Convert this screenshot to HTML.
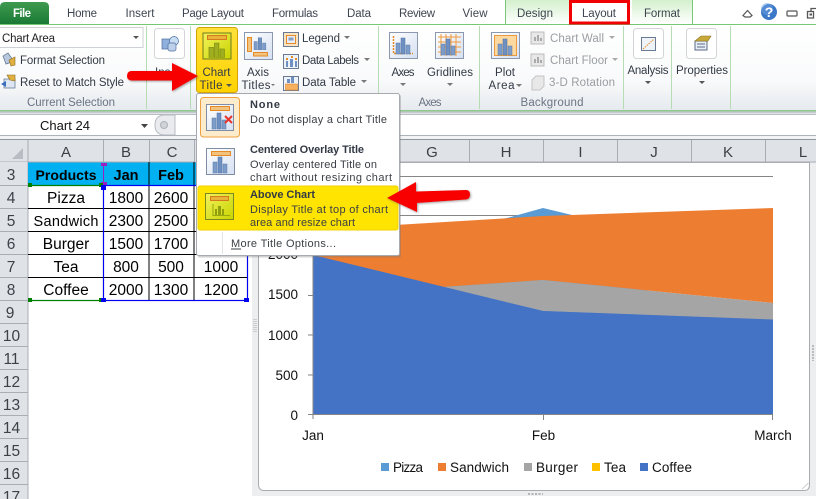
<!DOCTYPE html>
<html><head><meta charset="utf-8">
<style>
html,body{margin:0;padding:0;background:#fff;width:816px;height:499px;overflow:hidden}
svg{display:block}
text{font-family:"Liberation Sans",sans-serif;font-size:11.5px;fill:#3b3f45}
.tab{font-size:11.5px;fill:#3f4550;text-anchor:middle}
.rb{font-size:11.5px;fill:#333a45}
.dis{font-size:11.5px;fill:#9a9da2}
.grp{font-size:11.5px;fill:#6b7484;text-anchor:middle}
.c{text-anchor:middle}
.hd{font-size:15px;fill:#3c4148;text-anchor:middle}
.rh{font-size:15.5px;fill:#3c4148;text-anchor:middle}
.cell{font-size:15.5px;fill:#000;text-anchor:middle}
.b{font-weight:bold}
.ax{font-size:13.5px;fill:#111}
.m{font-size:11px;fill:#3b3f45}
.mb{font-size:11px;font-weight:bold;fill:#333a45}
</style></head><body>
<svg width="816" height="499" viewBox="0 0 816 499" xmlns="http://www.w3.org/2000/svg">
<defs>
<linearGradient id="rib" x1="0" y1="0" x2="0" y2="1"><stop offset="0" stop-color="#fff"/><stop offset=".65" stop-color="#f9fafb"/><stop offset="1" stop-color="#e6eaee"/></linearGradient>
<linearGradient id="file" x1="0" y1="0" x2="0" y2="1"><stop offset="0" stop-color="#3f9a4f"/><stop offset="1" stop-color="#1a7a35"/></linearGradient>
<linearGradient id="ctx" x1="0" y1="0" x2="0" y2="1"><stop offset="0" stop-color="#d3f0cd"/><stop offset="1" stop-color="#fff"/></linearGradient>
<linearGradient id="yb" x1="0" y1="0" x2="0" y2="1"><stop offset="0" stop-color="#ffe13a"/><stop offset="1" stop-color="#ffd200"/></linearGradient>
<linearGradient id="ic" x1="0" y1="0" x2="1" y2="1"><stop offset="0" stop-color="#fff"/><stop offset="1" stop-color="#d5e0f2"/></linearGradient>
<linearGradient id="ygi" x1="0" y1="0" x2="1" y2="1"><stop offset="0" stop-color="#f3f25a"/><stop offset="1" stop-color="#c8d400"/></linearGradient>
<filter id="sh" x="-20%" y="-30%" width="140%" height="160%"><feDropShadow dx="1" dy="1" stdDeviation="1" flood-color="#555" flood-opacity=".55"/></filter>
<g id="bars"><rect x="0" y="6" width="4" height="11" fill="#7d9cc9" stroke="#5a7aa8" stroke-width=".5"/><rect x="5" y="1" width="4" height="16" fill="#6f90c2" stroke="#4f6f9f" stroke-width=".5"/><rect x="10" y="8" width="4" height="9" fill="#7d9cc9" stroke="#5a7aa8" stroke-width=".5"/></g>
</defs>
<rect width="816" height="499" fill="#fff"/>

<!-- ribbon -->
<rect x="0" y="0" width="816" height="24" fill="#fff"/>
<rect x="0" y="25" width="816" height="85" fill="url(#rib)"/>
<rect x="505" y="0" width="64" height="24" fill="url(#ctx)"/>
<rect x="632" y="0" width="60" height="24" fill="url(#ctx)"/>
<rect x="569" y="2" width="61" height="22" fill="#fff"/>
<path d="M505.5 24V0M692.5 24V0" stroke="#7ac77c"/>
<path d="M0 24.5H816" stroke="#76c776" stroke-width="1"/>
<path d="M0 24V7Q0 2 5 2H44Q49 2 49 7V24Z" fill="url(#file)"/>
<text x="22" y="17" class="c b" style="fill:#fff;font-size:11.5px" textLength="18">File</text>
<text x="82" y="17" class="tab" textLength="30">Home</text>
<text x="140" y="17" class="tab" textLength="29">Insert</text>
<text x="213" y="17" class="tab" textLength="62">Page Layout</text>
<text x="295" y="17" class="tab" textLength="46">Formulas</text>
<text x="359" y="17" class="tab" textLength="24">Data</text>
<text x="417" y="17" class="tab" textLength="36">Review</text>
<text x="475" y="17" class="tab" textLength="25">View</text>
<text x="535" y="17" class="tab" textLength="36">Design</text>
<text x="599" y="17" class="tab" textLength="34">Layout</text>
<text x="662" y="17" class="tab" textLength="36">Format</text>
<rect x="570.5" y="1.5" width="58" height="21.5" fill="none" stroke="#f00000" stroke-width="3"/>

<!-- window controls -->
<path d="M743 15.5L747.5 10.5L752 15.5L750 17H745Z" fill="none" stroke="#555" stroke-width="1.2"/>
<circle cx="769" cy="12" r="8" fill="#3c78c8"/>
<circle cx="767" cy="9" r="6" fill="#6a9fe0" opacity=".5"/>
<text x="769" y="17" class="c b" style="fill:#fff;font-size:14px">?</text>
<rect x="787" y="11" width="10" height="5" rx="1" fill="none" stroke="#555" stroke-width="1.2"/>
<path d="M807.5 18V11.5H813.5V18ZM811 11V8.5H816" fill="none" stroke="#555" stroke-width="1.3"/>
<rect x="809.5" y="13.5" width="2.5" height="2" fill="#555"/>

<!-- separators -->
<path d="M146.5 26V109M190.5 26V109M378.5 26V109M479.5 26V109M623.5 26V109M671.5 26V109M730.5 26V109" stroke="#b5dcb2" stroke-width="1"/>
<rect x="0" y="110" width="816" height="1.5" fill="#8fc88f"/>
<rect x="0" y="111.5" width="816" height="2" fill="#c4cacf"/>

<!-- current selection -->
<rect x="-1" y="27.5" width="144" height="20" fill="#fff" stroke="#cdd0d4"/>
<text x="2" y="42" style="fill:#222;font-size:11.5px" textLength="53">Chart Area</text>
<path d="M133 36H139L136 39Z" fill="#555"/>
<path d="M3 56L8 53L13 60L9 63L6 64Z" fill="#b8c8de" stroke="#5b6f8c" stroke-width=".7"/>
<path d="M9 60L15 57V65L11 66Z" fill="#e0b040" stroke="#8a6a20" stroke-width=".6"/>
<text x="20" y="64" class="rb" textLength="85">Format Selection</text>
<rect x="4" y="79" width="11" height="9" fill="#dde6f2" stroke="#5b6f8c" stroke-width=".7"/>
<path d="M7 75L15 75V81L10 80Z" fill="#e0b040" stroke="#8a6a20" stroke-width=".6"/>
<path d="M1 84L6 81V87Z" fill="#3a6cc0"/>
<text x="20" y="86" class="rb" textLength="104">Reset to Match Style</text>
<text x="71" y="106" class="grp" textLength="88">Current Selection</text>

<!-- insert -->
<rect x="154.5" y="28.5" width="30" height="30" rx="3" fill="#fff" stroke="#d3d5d8"/>
<rect x="162" y="39" width="9" height="10" fill="#8fb0dc" stroke="#4b6e9f" stroke-width=".7"/>
<circle cx="174" cy="41" r="4.5" fill="#c8dcf2" stroke="#4b6e9f" stroke-width=".7"/>
<rect x="168" y="43" width="8" height="8" rx="2" fill="#bcd0ea" stroke="#4b6e9f" stroke-width=".7"/>
<text x="155" y="76" class="rb">Ins</text>

<!-- chart title button -->
<rect x="196.5" y="27.5" width="41" height="65" rx="3" fill="url(#yb)" stroke="#d5a300"/>
<rect x="203" y="33" width="28" height="26" fill="url(#ygi)" stroke="#6e7d20"/>
<rect x="207.5" y="35.5" width="19" height="4" fill="#e9b23a" stroke="#d67a1c"/>
<g transform="translate(209,43) scale(1.1,.85)" opacity=".9"><rect x="0" y="5" width="4" height="12" fill="#9aaa20" stroke="#6f7d10" stroke-width=".6"/><rect x="5" y="0" width="4" height="17" fill="#9aaa20" stroke="#6f7d10" stroke-width=".6"/><rect x="10" y="7" width="4" height="10" fill="#9aaa20" stroke="#6f7d10" stroke-width=".6"/></g>
<text x="216.5" y="76" class="rb c" textLength="28">Chart</text>
<text x="211" y="89" class="rb c" textLength="23">Title</text>
<path d="M226 84H232L229 87Z" fill="#555"/>

<!-- axis titles -->
<rect x="244.5" y="32.5" width="28" height="27" fill="url(#ic)" stroke="#8b98ad"/>
<rect x="247.5" y="37.5" width="4" height="14" fill="#f2c37e" stroke="#e58a24"/>
<rect x="253.5" y="52.5" width="14" height="3.5" fill="#f2c37e" stroke="#e58a24"/>
<use href="#bars" transform="translate(254,37) scale(.85,.75)"/>
<text x="258" y="76" class="rb c" textLength="22">Axis</text>
<text x="256" y="89" class="rb c" textLength="29">Titles</text>
<path d="M271 84H275L273 86Z" fill="#777"/>

<!-- legend etc -->
<rect x="283.5" y="32.5" width="15" height="14" fill="#fbe3c0" stroke="#6a7a92"/>
<rect x="286.5" y="35.5" width="9" height="8" fill="#e8eef7" stroke="#e58a24"/>
<rect x="288.5" y="37.5" width="5" height="3" fill="#8aa0c0"/>
<text x="302" y="42" class="rb" textLength="38">Legend</text>
<path d="M344 36H350L347 39Z" fill="#777"/>
<rect x="283.5" y="54.5" width="15" height="14" fill="#eef2f9" stroke="#6a7a92"/>
<path d="M286 58h2v2h-2zM291 56h2v2h-2zM295 58h2v2h-2z" fill="#e58a24"/>
<path d="M286 61h2v6h-2zM290 59h3v8h-3zM295 61h2v6h-2z" fill="#6f90c2"/>
<text x="302" y="64" class="rb" textLength="57">Data Labels</text>
<path d="M364 58H370L367 61Z" fill="#777"/>
<rect x="283.5" y="76.5" width="15" height="14" fill="#eef2f9" stroke="#6a7a92"/>
<path d="M291 77h3v6h-3zM287 79h3v4h-3z" fill="#6f90c2"/>
<rect x="285.5" y="84" width="12" height="6" fill="#f5b060" stroke="#e58a24" stroke-width=".6"/>
<text x="302" y="86" class="rb" textLength="54">Data Table</text>
<path d="M361 80H367L364 83Z" fill="#777"/>

<!-- Axes -->
<rect x="389.5" y="32.5" width="28" height="26" fill="url(#ic)" stroke="#8b98ad"/>
<path d="M393.5 36V53.5H413" fill="none" stroke="#e58a24" stroke-width="1.5" stroke-dasharray="2 1"/>
<use href="#bars" transform="translate(396,37)"/>
<text x="403" y="76" class="rb c" textLength="23">Axes</text>
<path d="M400 83H406L403 86Z" fill="#777"/>
<rect x="435.5" y="32.5" width="28" height="26" fill="url(#ic)" stroke="#8b98ad"/>
<path d="M438 37H461M438 42H461M438 47H461M438 52H461M441 34V56M446 34V56M451 34V56M456 34V56" stroke="#ef9a3c" stroke-width="1"/>
<use href="#bars" transform="translate(441,38)"/>
<text x="450" y="76" class="rb c" textLength="46">Gridlines</text>
<path d="M447 83H453L450 86Z" fill="#777"/>
<text x="430" y="106" class="grp" textLength="23">Axes</text>

<!-- Plot area -->
<rect x="491.5" y="32.5" width="28" height="26" fill="url(#ic)" stroke="#8b98ad"/>
<rect x="494.5" y="35.5" width="22" height="20" fill="#fcd9a0" stroke="#ea9a3c"/>
<use href="#bars" transform="translate(498,38)"/>
<text x="505" y="76" class="rb c" textLength="20">Plot</text>
<text x="501.500" y="89" class="rb c" textLength="26">Area</text>
<path d="M516 84H522L519 87Z" fill="#777"/>
<rect x="531" y="32" width="13" height="12" fill="#e8e8e8" stroke="#bbb"/>
<path d="M534 41v-4h2v4zM537 41v-6h2v6zM540 41v-3h2v3z" fill="#aaa"/>
<text x="550" y="42" class="dis" textLength="54">Chart Wall</text>
<path d="M609 36H615L612 39Z" fill="#aaa"/>
<rect x="531" y="54" width="13" height="12" fill="#e8e8e8" stroke="#bbb"/>
<path d="M534 63v-4h2v4zM537 63v-6h2v6zM540 63v-3h2v3z" fill="#aaa"/>
<text x="550" y="64" class="dis" textLength="58">Chart Floor</text>
<path d="M612 58H618L615 61Z" fill="#aaa"/>
<path d="M532 80L536 76H544V86L540 90H532Z" fill="#e8e8e8" stroke="#c4c4c4"/>
<text x="549" y="86" class="dis" textLength="66">3-D Rotation</text>
<text x="552" y="106" class="grp" textLength="63">Background</text>

<!-- Analysis, Properties -->
<rect x="633.5" y="28.5" width="30" height="30" rx="3" fill="#fff" stroke="#d3d5d8"/>
<rect x="641.5" y="37.5" width="14" height="13" fill="#eef2f9" stroke="#6a7a92"/>
<path d="M643 49L654 39" stroke="#e58a24" stroke-dasharray="1.5 1"/>
<text x="648" y="74" class="rb c" textLength="41">Analysis</text>
<path d="M645 81H651L648 84Z" fill="#555"/>
<rect x="686.5" y="28.5" width="30" height="30" rx="3" fill="#fff" stroke="#d3d5d8"/>
<rect x="695" y="41" width="12" height="9" fill="#e8eef7" stroke="#5a6a84"/>
<path d="M697 44h8M697 47h8" stroke="#5a6a84"/>
<path d="M695 41L701 36H711L708 41Z" fill="#c9a83a" stroke="#8a7420" stroke-width=".6"/>
<text x="702" y="74" class="rb c" textLength="52">Properties</text>
<path d="M699 81H705L702 84Z" fill="#555"/>

<!-- formula bar -->
<rect x="0" y="114" width="816" height="21" fill="#fff"/>
<rect x="0" y="114" width="816" height="1" fill="#b8bdc3"/>
<text x="40" y="130" style="font-size:13px;fill:#111" textLength="50">Chart 24</text>
<path d="M141 124H148L144.5 128Z" fill="#444"/>
<path d="M175 115H165Q155 115 155 125Q155 135 165 135H175Z" fill="#e9ebee" stroke="#b8bcc2"/>
<circle cx="164" cy="125" r="3.5" fill="#d0d3d7" stroke="#aeb2b8"/>
<rect x="0" y="135" width="816" height="1" fill="#aeb3b9"/>
<rect x="0" y="136" width="816" height="3" fill="#f2f3f5"/>
<rect x="0" y="139" width="816" height="1.2" fill="#8f959c"/>

<!-- col headers -->
<rect x="0" y="140" width="816" height="22" fill="#dfe3e8"/>
<rect x="0" y="161.5" width="816" height="1" fill="#a9aeb5"/>
<path d="M23 148V159H12Z" fill="#b9bdc3"/>
<path d="M28 140V499M103.5 140V162M149.5 140V162M194.5 140V162M469.5 140V162M543.5 140V162M617.5 140V162M691.5 140V162M765.5 140V162M395.5 140V162" stroke="#a9aeb5" fill="none"/>
<text x="66" y="157" class="hd">A</text>
<text x="126" y="157" class="hd">B</text>
<text x="172" y="157" class="hd">C</text>
<text x="432" y="157" class="hd">G</text>
<text x="506" y="157" class="hd">H</text>
<text x="580.500" y="157" class="hd">I</text>
<text x="654" y="157" class="hd">J</text>
<text x="728" y="157" class="hd">K</text>
<text x="803" y="157" class="hd">L</text>

<!-- row headers -->
<rect x="0" y="162" width="28" height="337" fill="#dfe3e8"/>
<rect x="27.500" y="162" width="1" height="337" fill="#a9aeb5"/>
<path d="M0 185.500H28M0 208.500H28M0 231.500H28M0 254.500H28M0 277.500H28M0 300.500H28M0 323.500H28M0 346.500H28M0 369.500H28M0 392.500H28M0 415.500H28M0 438.500H28M0 461.500H28M0 484.500H28" stroke="#a9aeb5"/>
<text x="11" y="180" class="rh">3</text><text x="11" y="203" class="rh">4</text><text x="11" y="226" class="rh">5</text><text x="11" y="249" class="rh">6</text><text x="11" y="272" class="rh">7</text><text x="11" y="295" class="rh">8</text><text x="10" y="318" class="rh">9</text>
<text x="11.500" y="341" class="rh">10</text><text x="11.500" y="364" class="rh">11</text><text x="11.500" y="387" class="rh">12</text><text x="11.500" y="410" class="rh">13</text><text x="11.500" y="433" class="rh">14</text><text x="11.500" y="456" class="rh">15</text><text x="11.500" y="479" class="rh">16</text><text x="11.500" y="502" class="rh">17</text>

<!-- table -->
<rect x="28" y="162.500" width="221" height="23" fill="#00b0f0"/>
<path d="M28 208.500H248M28 231.500H248M28 254.500H248M28 277.500H248M149 162V300M194 162V300" stroke="#000" stroke-width="1"/>
<text x="66" y="180" class="cell b" style="font-size:14px" textLength="61">Products</text>
<text x="126" y="180" class="cell b" style="font-size:14.5px">Jan</text>
<text x="171" y="180" class="cell b" style="font-size:14.5px">Feb</text>
<text x="66" y="203" class="cell">Pizza</text><text x="126" y="203" class="cell">1800</text><text x="171" y="203" class="cell">2600</text>
<text x="66" y="226" class="cell" style="font-size:14.5px" textLength="65">Sandwich</text><text x="126" y="226" class="cell">2300</text><text x="171" y="226" class="cell">2500</text>
<text x="66" y="249" class="cell">Burger</text><text x="126" y="249" class="cell">1500</text><text x="171" y="249" class="cell">1700</text>
<text x="66" y="272" class="cell">Tea</text><text x="126" y="272" class="cell">800</text><text x="171" y="272" class="cell">500</text><text x="221" y="272" class="cell">1000</text>
<text x="66" y="295" class="cell">Coffee</text><text x="126" y="295" class="cell">2000</text><text x="171" y="295" class="cell">1300</text><text x="221" y="295" class="cell">1200</text>
<path d="M103.500 164V185" stroke="#9b20c0" stroke-width="1"/>
<rect x="101" y="163" width="6" height="3" fill="#9b20c0"/><rect x="101" y="182" width="6" height="3" fill="#9b20c0"/>
<rect x="103.500" y="185.500" width="144" height="115" fill="none" stroke="#0000f0" stroke-width="1.2"/>
<path d="M28 185.500H103M28 300.500H103" stroke="#008000" stroke-width="1.2"/>
<rect x="28" y="183" width="4" height="4" fill="#008000"/><rect x="99" y="183" width="4" height="4" fill="#008000"/><rect x="28" y="298" width="4" height="4" fill="#008000"/><rect x="99" y="298" width="4" height="4" fill="#008000"/>
<rect x="101" y="185" width="5" height="5" fill="#0000f0"/><rect x="101" y="298" width="5" height="4" fill="#0000f0"/><rect x="244" y="298" width="5" height="4" fill="#0000f0"/>

<!-- chart frame -->
<rect x="252" y="162.500" width="564" height="333.500" fill="#eceef0"/>
<path d="M258.500 162.500V484Q258.500 490.500 264 490.500H804Q809.500 490.500 809.500 485V162.500Z" fill="#fff" stroke="#a8acb0"/>
<path d="M254 319v14M256 319v14" stroke="#aaa" stroke-width="1" stroke-dasharray="1 1"/>
<path d="M813 345v16" stroke="#bbb" stroke-width="2" stroke-dasharray="2 1"/>
<path d="M528 494H543" stroke="#b5b5b5" stroke-width="2" stroke-dasharray="2 1.500"/>
<path d="M802 489L808.500 483" stroke="#ccc"/>

<!-- chart -->
<path d="M313 176.500H773M313 215.500H773" stroke="#868686" stroke-width="1"/>
<polygon points="313,414 313,256 507,218 543,208 572,215 773,414" fill="#5b9bd5"/>
<polygon points="313,230 543,216 773,208 773,303 543,280 443,287 313,300" fill="#ed7d31"/>
<polygon points="443,287 543,280 773,303 773,320 543,311" fill="#a5a5a5"/>
<polygon points="313,255 543,311 773,319.500 773,414 313,414" fill="#4472c4"/>
<path d="M313 176V419M308 414.500H773M308 375H313M308 335H313M308 295.500H313M308 255.500H313M543.500 414V420M772.500 414V420" stroke="#868686" fill="none"/>
<text x="298" y="259" class="ax" text-anchor="end">2000</text>
<text x="298" y="299" class="ax" text-anchor="end">1500</text>
<text x="298" y="340" class="ax" text-anchor="end">1000</text>
<text x="298" y="380" class="ax" text-anchor="end">500</text>
<text x="298" y="420" class="ax" text-anchor="end">0</text>
<text x="313" y="440" class="ax c">Jan</text>
<text x="543.500" y="440" class="ax c">Feb</text>
<text x="773" y="440" class="ax c">March</text>
<rect x="381" y="463" width="8" height="8" fill="#5b9bd5"/><text x="393" y="472" class="ax" textLength="30">Pizza</text>
<rect x="438" y="463" width="8" height="8" fill="#ed7d31"/><text x="450" y="472" class="ax" textLength="59">Sandwich</text>
<rect x="524" y="463" width="8" height="8" fill="#a5a5a5"/><text x="536" y="472" class="ax" textLength="42">Burger</text>
<rect x="592" y="463" width="8" height="8" fill="#ffc000"/><text x="604" y="472" class="ax" textLength="22">Tea</text>
<rect x="640" y="463" width="8" height="8" fill="#4472c4"/><text x="652" y="472" class="ax" textLength="40">Coffee</text>

<!-- dropdown -->
<rect x="197" y="94" width="203" height="162.500" rx="1.500" fill="#777" opacity=".35" transform="translate(1,1)"/>
<rect x="196.500" y="93.500" width="203" height="162" rx="2" fill="#fff" stroke="#a7abb0"/>
<rect x="200.500" y="97.500" width="39" height="39.500" rx="3" fill="#fdeccb" stroke="#f0a040"/>
<rect x="206.500" y="104.500" width="27" height="26" fill="url(#ic)" stroke="#7f8da5"/>
<rect x="210.500" y="106.500" width="19" height="4" fill="#f2c37e" stroke="#e58a24"/>
<use href="#bars" transform="translate(212,112)"/>
<path d="M225 116L232 123M232 116L225 123" stroke="#e8342c" stroke-width="2"/>
<text x="250" y="108" class="mb" textLength="30">None</text>
<text x="250" y="123" class="m" textLength="137">Do not display a chart Title</text>
<rect x="206.500" y="148.500" width="28" height="26" fill="url(#ic)" stroke="#7f8da5"/>
<rect x="211.500" y="151.500" width="19" height="4" fill="#f2c37e" stroke="#e58a24"/>
<use href="#bars" transform="translate(213,156) scale(1,1)"/>
<text x="250" y="153" class="mb" textLength="114">Centered Overlay Title</text>
<text x="250" y="168" class="m" textLength="127">Overlay centered Title on</text>
<text x="250" y="181" class="m" textLength="142">chart without resizing chart</text>
<rect x="198" y="186" width="200" height="44" rx="2" fill="#fee400" stroke="#f2d000"/>
<rect x="205.500" y="193.500" width="28" height="26" fill="url(#ygi)" stroke="#7a8a20"/>
<rect x="210.500" y="196.500" width="18" height="4" fill="#e9b23a" stroke="#d67a1c"/>
<path d="M213 204V215.500H230" fill="none" stroke="#98a810"/>
<path d="M215 209h2v6h-2zM218 206h3v9h-3zM222 209h2v6h-2z" fill="#8f9f10"/>
<text x="250" y="198" class="mb" textLength="65">Above Chart</text>
<text x="250" y="213" class="m" textLength="138">Display Title at top of chart</text>
<text x="250" y="226" class="m" textLength="105">area and resize chart</text>
<path d="M222.500 232V254" stroke="#e2e4e7"/>
<text x="231" y="247" class="m" textLength="105">More Title Options...</text>
<path d="M231 249H241" stroke="#3b3f45"/>

<!-- arrows -->
<g filter="url(#sh)">
<path d="M131 71H172V63L198 76L172 91V80.500H131Q127 80 127 76Q127 71.500 131 71Z" fill="#f80000"/>
<path d="M387 198L416 182V191.500L466 190Q470 190 470 194.500Q470 199 466 199.500L417 203L417 212Z" fill="#f80000"/>
</g>
</svg>
</body></html>
